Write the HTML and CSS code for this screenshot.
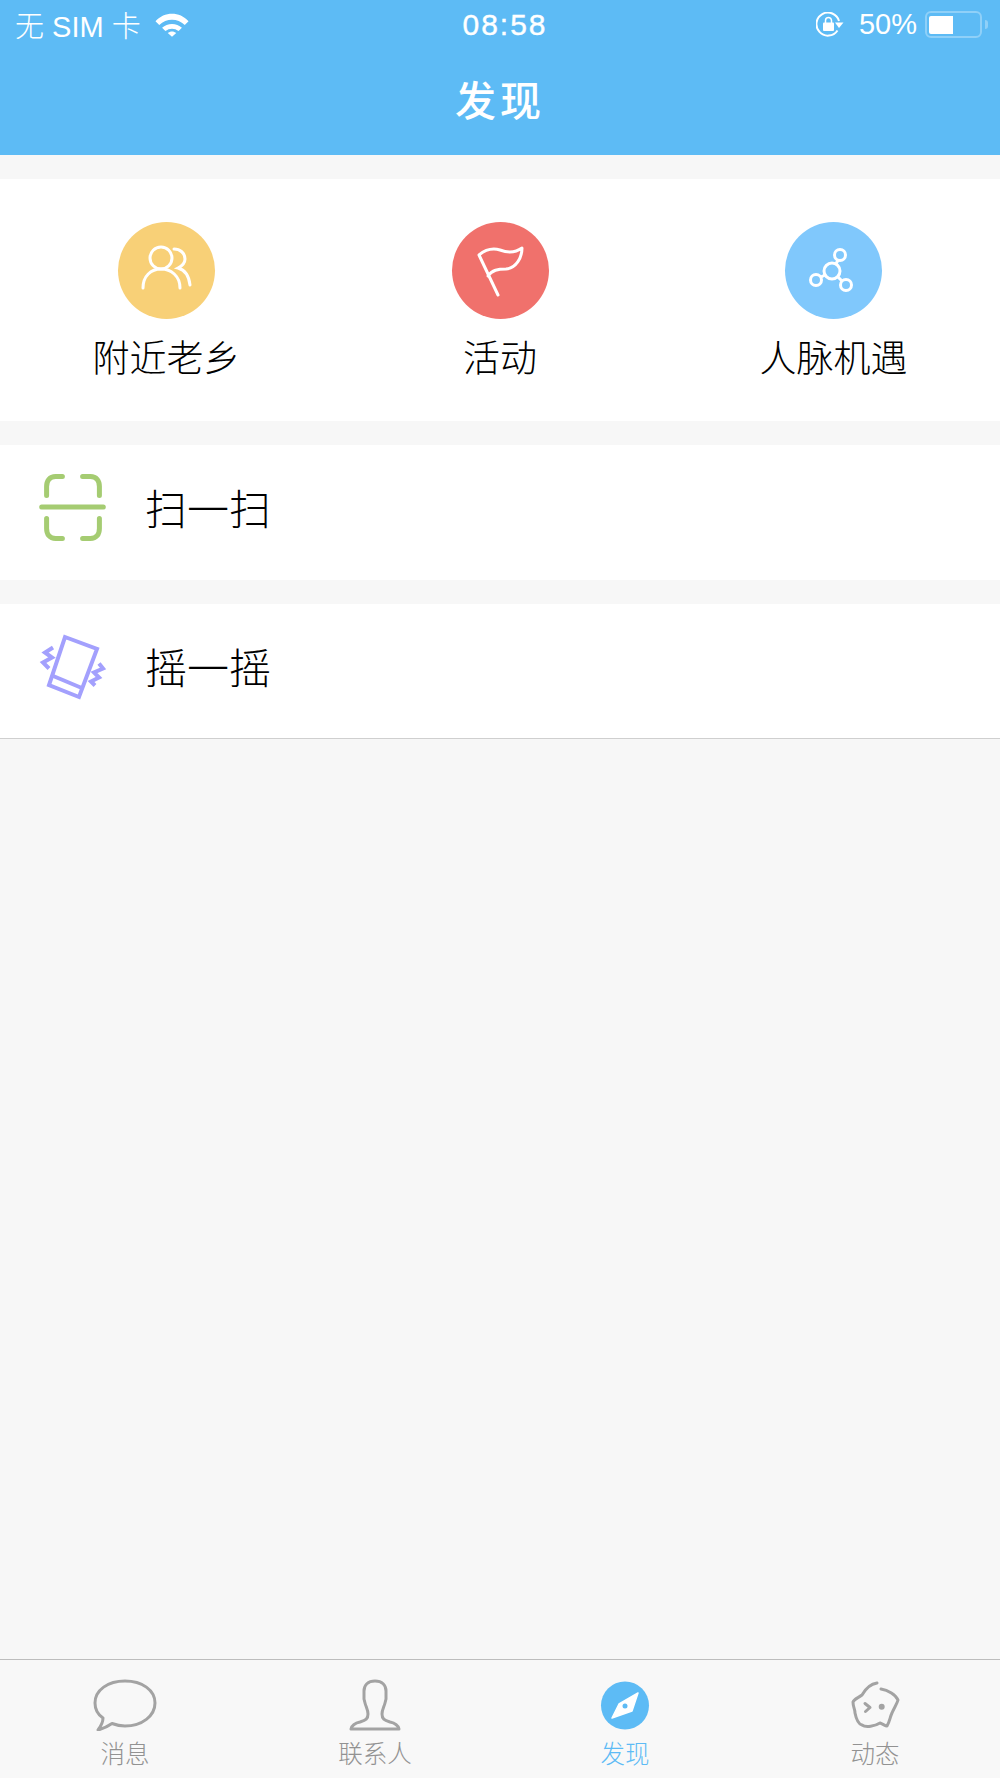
FILE: index.html
```html
<!DOCTYPE html>
<html lang="zh-CN">
<head>
    <meta charset="UTF-8">
    <meta name="viewport" content="width=device-width, initial-scale=1.0">
    <title>发现</title>
    <link rel="stylesheet" href="styles.css">
</head>
<body>
    <div class="page">
        <header class="top">
            <div class="status">
                <div class="status-left">
                    <span>无 SIM 卡</span>
                    <svg class="wifi" viewBox="0 0 36 26" width="34" height="25">
                        <path d="M0.5 9.500C10 -1 26 -1 35.500 9.500L31.500 13.500C24 6 12 6 4.500 13.500Z" fill="#fff"/>
                        <path d="M7.500 16.500C13 11 23 11 28.500 16.500L25 20C21 16.500 15 16.500 11 20Z" fill="#fff"/>
                        <path d="M13.500 22C16 19.800 20 19.800 22.500 22L18 26Z" fill="#fff"/>
                    </svg>
                </div>
                <div class="status-time">08:58</div>
                <div class="status-right">
                    <svg class="lock" viewBox="0 0 28 26" width="28" height="26">
                        <path d="M21.500 18.500A11.500 11.500 0 1 1 23 9" fill="none" stroke="#fff" stroke-width="2"/>
                        <path d="M19 10.500H27.500L23 16Z" fill="#fff"/>
                        <rect x="7" y="10.500" width="11" height="8.500" rx="1" fill="#fff"/>
                        <path d="M9.500 11V8.500a3 3 0 0 1 6 0V11" fill="none" stroke="#fff" stroke-width="1.500"/>
                    </svg>
                    <span class="percent">50%</span>
                    <div class="battery"><div class="battery-fill"></div></div>
                    <div class="battery-tip"></div>
                </div>
            </div>
            <h1 class="title">发现</h1>
        </header>

        <section class="shortcuts">
            <div class="shortcut">
                <div class="badge badge-yellow">
                    <svg viewBox="0 0 97 97" width="97" height="97" fill="none" stroke="#fff" stroke-width="3" stroke-linecap="round">
                        <circle cx="43" cy="36" r="11"/>
                        <path d="M25 66C25 54 33 47 43 47S62 54 62 66"/>
                        <path d="M56 27C62 27 67 31 67 37C67 41 64 44 60 46C67 48 71 54 72 63"/>
                    </svg>
                </div>
                <div class="shortcut-name">附近老乡</div>
            </div>
            <div class="shortcut">
                <div class="badge badge-red">
                    <svg viewBox="0 0 97 97" width="97" height="97" fill="none" stroke="#fff" stroke-width="3" stroke-linecap="round" stroke-linejoin="round">
                        <path d="M46 73L27 33C33 28 41 26 48 28C56 31 63 31 70 26C70 36 64 46 54 47C46 47 40 48 36 54"/>
                    </svg>
                </div>
                <div class="shortcut-name">活动</div>
            </div>
            <div class="shortcut">
                <div class="badge badge-blue">
                    <svg viewBox="0 0 97 97" width="97" height="97" fill="none" stroke="#fff" stroke-width="3">
                        <circle cx="47" cy="49" r="8"/>
                        <circle cx="55" cy="33" r="5.500"/>
                        <circle cx="31" cy="58" r="5.500"/>
                        <circle cx="61" cy="63" r="5.500"/>
                        <path d="M51 42L53 38M40 53L36 55M53 55L57 59"/>
                    </svg>
                </div>
                <div class="shortcut-name">人脉机遇</div>
            </div>
        </section>

        <div class="row">
            <svg class="row-icon" viewBox="0 0 72 72" width="72" height="72" fill="none" stroke="#a5cc72" stroke-width="5" stroke-linecap="round">
                <path d="M9.600 23.400V14.600C9.600 8.600 12.600 4.600 18.600 4.600H25.400"/>
                <path d="M45.600 4.600H53.400C59.400 4.600 62.400 8.600 62.400 14.600V23.400"/>
                <path d="M4.700 35H66.300"/>
                <path d="M9.600 46.600V56.400C9.600 62.400 12.600 66.400 18.600 66.400H25.400"/>
                <path d="M45.600 66.400H53.400C59.400 66.400 62.400 62.400 62.400 56.400V46.600"/>
            </svg>
            <span class="row-name">扫一扫</span>
        </div>

        <div class="row row-last">
            <svg class="row-icon" viewBox="0 0 72 72" width="72" height="72" fill="none" stroke="#a3a0fd" stroke-width="4">
                <path d="M28 6L60 18L42 66L12 54Z"/>
                <path d="M15 44.500L46 57.500"/>
                <path d="M16 16.500L8 21.500L15 26.500L6 31.500L12 37.500"/>
                <path d="M62 32.500L66 37.500L57 41.500L62 46.500L54 50.500L58 54.500"/>
            </svg>
            <span class="row-name">摇一摇</span>
        </div>

        <div class="spacer"></div>

        <nav class="tabs">
            <div class="tab">
                <svg viewBox="0 0 64 52" width="64" height="52" fill="none" stroke="#a3a3a3" stroke-width="3" stroke-linejoin="round">
                    <path d="M10 39C4 35 2 29 2 24C2 11 15 2 32 2S62 11 62 24S49 47 32 47C27 47 23 46 19 44.500C14 48 9 50 5 51C8 47 10 44 10 39Z"/>
                </svg>
                <span>消息</span>
            </div>
            <div class="tab">
                <svg viewBox="0 0 64 52" width="64" height="52" fill="none" stroke="#a3a3a3" stroke-width="3" stroke-linejoin="round">
                    <path d="M32 2C25 2 21 6 21 12V20L22 24C23 28 25 31 25 35C25 40 23 41 17 43C12 44 9 46 8 50H56C55 46 52 44 47 43C41 41 39 40 39 35C39 31 41 28 42 24L43 20V12C43 6 39 2 32 2Z"/>
                </svg>
                <span>联系人</span>
            </div>
            <div class="tab tab-on">
                <svg viewBox="0 0 64 52" width="64" height="52">
                    <circle cx="32" cy="26.500" r="24" fill="#5dbbf5"/>
                    <path d="M45 14L39 32L19 39L26 25Z" fill="#fff" stroke="#fff" stroke-width="1.500" stroke-linejoin="round"/>
                    <circle cx="32" cy="27" r="2.500" fill="#5dbbf5"/>
                </svg>
                <span>发现</span>
            </div>
            <div class="tab">
                <svg viewBox="0 0 64 52" width="64" height="52" fill="none" stroke="#a3a3a3" stroke-width="3" stroke-linecap="round" stroke-linejoin="round">
                    <path d="M34 4C27 5 23 9 19 16C15 19 11 20 10 23C10 28 12 30 12 34C13 39 15 45 19 46C23 49 32 47 37 44C40 45 42 47 44 47C47 42 47 38 49 34C51 29 54 25 55 21C53 16 45 11 38 10"/>
                    <path d="M22 24.500L27 28.500L22.500 32.500"/>
                    <circle cx="38.700" cy="27.700" r="1.500" fill="#a3a3a3"/>
                </svg>
                <span>动态</span>
            </div>
        </nav>
    </div>
</body>
</html>
```

FILE: styles.css
```css
* {
    box-sizing: border-box;
}

body {
    margin: 0;
    font-family: "Noto Sans CJK SC", "Liberation Sans", sans-serif;
    background-color: #f7f7f7;
}

.page {
    display: flex;
    flex-direction: column;
    height: 1778px;
}

/* Blue header with the phone status line */
.top {
    height: 155px;
    background-color: #5dbbf5;
    color: #fff;
    flex-shrink: 0;
}

.status {
    display: grid;
    grid-template-columns: 1fr auto 1fr;
    align-items: center;
    height: 50px;
    padding: 0 12px 0 15px;
    font-family: "Liberation Sans", "Noto Sans CJK SC", sans-serif;
}

.status-left {
    display: flex;
    align-items: center;
    gap: 14px;
    font-size: 29px;
    font-weight: 300;
    margin-top: -2px;
}

.status-time {
    margin-left: 7px;
    letter-spacing: 2px;
    font-size: 30px;
    -webkit-text-stroke: 0.4px #fff;
}

.status-right {
    display: flex;
    align-items: center;
    justify-content: flex-end;
    margin-top: -1px;
}

.lock {
    margin-right: 15px;
}

.percent {
    font-size: 29px;
    margin-right: 8px;
}

.battery {
    width: 57px;
    height: 27px;
    padding: 2.5px 2px;
    border: 2px solid #8fd0f8;
    border-radius: 6px;
}

.battery-fill {
    width: 24px;
    height: 18px;
    background-color: #fff;
    border-radius: 2px 0 0 2px;
}

.battery-tip {
    width: 3px;
    height: 9px;
    margin-left: 3px;
    background-color: #8fd0f8;
    border-radius: 0 3px 3px 0;
}

.title {
    margin: 0;
    text-align: center;
    font-size: 41px;
    line-height: 96px;
    font-weight: 500;
    letter-spacing: 4px;
}

/* Three round shortcuts */
.shortcuts {
    display: grid;
    grid-template-columns: 333px 334px 333px;
    height: 242px;
    margin-top: 24px;
    background-color: #fff;
    flex-shrink: 0;
}

.shortcut {
    display: flex;
    flex-direction: column;
    align-items: center;
    padding-top: 43px;
}

.badge {
    width: 97px;
    height: 97px;
    border-radius: 50%;
}

.badge svg {
    display: block;
}

.badge-yellow {
    background-color: #f8d077;
}

.badge-red {
    background-color: #f0716c;
}

.badge-blue {
    background-color: #80c8fc;
}

.shortcut-name {
    margin-top: 12px;
    font-size: 37px;
    line-height: 50px;
    font-weight: 300;
    color: #000;
}

/* Plain list rows */
.row {
    display: flex;
    align-items: center;
    gap: 36px;
    height: 135px;
    margin-top: 24px;
    padding: 0 0 9px 37px;
    background-color: #fff;
    flex-shrink: 0;
}

.row-last {
    border-bottom: 1px solid #cfcfcf;
}

.row-name {
    padding-bottom: 3px;
    font-size: 42px;
    font-weight: 300;
    color: #000;
}

.spacer {
    flex: 1;
}

/* Bottom tab bar */
.tabs {
    display: grid;
    grid-template-columns: repeat(4, 1fr);
    height: 119px;
    border-top: 1px solid #bdbdbd;
    background-color: #f8f8f8;
    flex-shrink: 0;
}

.tab {
    display: flex;
    flex-direction: column;
    align-items: center;
    padding-top: 19px;
    color: #929292;
    font-size: 24.5px;
    font-weight: 300;
}

.tab svg {
    display: block;
}

.tab span {
    line-height: 34px;
    margin-top: 5px;
}

.tab-on {
    color: #5dbbf5;
}
```
